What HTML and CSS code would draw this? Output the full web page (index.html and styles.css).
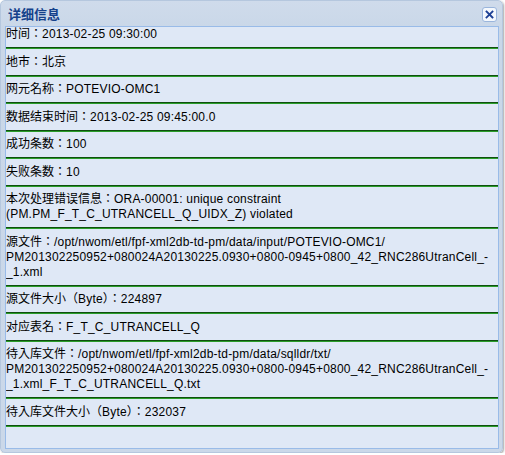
FILE: index.html
```html
<!DOCTYPE html>
<html>
<head>
<meta charset="utf-8">
<link rel="stylesheet" href="styles.css">
</head>
<body>
<div class="window">
  <div class="header">
    <span class="title">详细信息</span>
    <span class="close"><svg width="15" height="15" viewBox="0 0 15 15"><rect x="0.5" y="0.5" width="14" height="14" rx="2.5" fill="#f4f8fd" stroke="#9ab5dc"/><path d="M4.5 4.5 L10.5 10.5 M10.5 4.5 L4.5 10.5" stroke="#1d3f94" stroke-width="1.8" stroke-linecap="square"/></svg></span>
  </div>
  <div class="body">
    <div class="item">时间：<span class="v">2013-02-25 09:30:00</span></div>
    <div class="rule"></div>
    <div class="item">地市：北京</div>
    <div class="rule"></div>
    <div class="item">网元名称：<span class="v">POTEVIO-OMC1</span></div>
    <div class="rule"></div>
    <div class="item">数据结束时间：<span class="v">2013-02-25 09:45:00.0</span></div>
    <div class="rule"></div>
    <div class="item">成功条数：<span class="v">100</span></div>
    <div class="rule"></div>
    <div class="item">失败条数：<span class="v">10</span></div>
    <div class="rule"></div>
    <div class="item">本次处理错误信息：<span class="v">ORA-00001: unique constraint<br>(PM.PM_F_T_C_UTRANCELL_Q_UIDX_Z) violated</span></div>
    <div class="rule"></div>
    <div class="item">源文件：<span class="v">/opt/nwom/etl/fpf-xml2db-td-pm/data/input/POTEVIO-OMC1/<br>PM201302250952+080024A20130225.0930+0800-0945+0800_42_RNC286UtranCell_-<br>_1.xml</span></div>
    <div class="rule"></div>
    <div class="item">源文件大小（<span class="v">Byte</span>）：<span class="v">224897</span></div>
    <div class="rule"></div>
    <div class="item">对应表名：<span class="v">F_T_C_UTRANCELL_Q</span></div>
    <div class="rule"></div>
    <div class="item">待入库文件：<span class="v">/opt/nwom/etl/fpf-xml2db-td-pm/data/sqlldr/txt/<br>PM201302250952+080024A20130225.0930+0800-0945+0800_42_RNC286UtranCell_-<br>_1.xml_F_T_C_UTRANCELL_Q.txt</span></div>
    <div class="rule"></div>
    <div class="item">待入库文件大小（<span class="v">Byte</span>）：<span class="v">232037</span></div>
    <div class="rule"></div>
  </div>
</div>
</body>
</html>
```
FILE: styles.css
```css
html, body {
  margin: 0;
  padding: 0;
  background: #ffffff;
}
.window {
  box-sizing: border-box;
  width: 503px;
  height: 453px;
  border: 1px solid #b5c7de;
  border-radius: 5px;
  background: linear-gradient(#cfdbeb, #c9d7e8 30px, #cbd8e9);
  box-shadow: 1px 1px 2px rgba(0, 0, 0, 0.35);
  padding: 0 3px 3px 4px;
  display: flex;
  flex-direction: column;
}
.header {
  flex: none;
  height: 25px;
  display: flex;
  align-items: center;
  justify-content: space-between;
  padding: 0 2px 0 3px;
}
.title {
  font-family: "Noto Sans CJK SC", sans-serif;
  font-weight: bold;
  font-size: 13px;
  color: #15428b;
  line-height: 16px;
}
.close {
  display: flex;
  width: 15px;
  height: 15px;
  margin-top: 2px;
}
.body {
  flex: 1;
  min-height: 0;
  overflow: hidden;
  border: 1px solid #99bbe8;
  background: #dfe8f6;
  font-family: "Liberation Sans", "Noto Sans CJK JP", sans-serif;
  font-size: 12px;
  line-height: 15px;
  color: #000;
}
.item {
  white-space: nowrap;
}
.v {
  letter-spacing: 0.2px;
}
.rule {
  height: 0;
  border-top: 1px solid #0f4f0f;
  border-bottom: 1px solid #2a9d2a;
  margin: 5px 0 5.5px;
}
```
